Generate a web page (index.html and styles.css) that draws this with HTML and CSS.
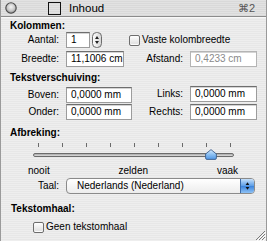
FILE: index.html
```html
<!DOCTYPE html>
<html lang="nl">
<head>
    <meta charset="UTF-8">
    <title>Inhoud</title>
    <link rel="stylesheet" href="styles.css">
</head>
<body>
    <div class="panel">
        <div class="titlebar">
            <svg class="close" width="12" height="12" viewBox="0 0 12 12">
                <defs>
                    <radialGradient id="cg" cx="0.5" cy="0.4" r="0.6">
                        <stop offset="0" stop-color="#f4f4f4"/>
                        <stop offset="0.6" stop-color="#c8c8c8"/>
                        <stop offset="1" stop-color="#8a8a8a"/>
                    </radialGradient>
                </defs>
                <circle cx="6" cy="6" r="5.2" fill="url(#cg)" stroke="#4a4a4a" stroke-width="1.1"/>
            </svg>
            <span class="title-box"></span>
            <span class="title">Inhoud</span>
            <span class="shortcut">⌘2</span>
        </div>

        <div class="content">
            <h3 class="heading">Kolommen:</h3>
            <div class="row">
                <span class="label">Aantal:</span>
                <span class="field small">1</span>
                <svg class="stepper" width="10" height="16" viewBox="0 0 10 16">
                    <defs>
                        <linearGradient id="sg" x1="0" y1="0" x2="1" y2="0">
                            <stop offset="0" stop-color="#ffffff"/>
                            <stop offset="1" stop-color="#d4d4d4"/>
                        </linearGradient>
                    </defs>
                    <rect x="0.5" y="0.5" width="9" height="15" rx="4" fill="url(#sg)" stroke="#6c6c6c"/>
                    <path d="M5 4 L7 7 L3 7 Z" fill="#222"/>
                    <path d="M5 12 L7 9 L3 9 Z" fill="#222"/>
                </svg>
                <span class="check-wrap">
                    <span class="checkbox"></span>
                    <span class="check-label">Vaste kolombreedte</span>
                </span>
            </div>
            <div class="row">
                <span class="label">Breedte:</span>
                <span class="field medium">11,1006 cm</span>
                <span class="right">
                    <span class="label-right">Afstand:</span>
                    <span class="field wide disabled">0,4233 cm</span>
                </span>
            </div>

            <h3 class="heading second">Tekstverschuiving:</h3>
            <div class="row">
                <span class="label">Boven:</span>
                <span class="field mm">0,0000 mm</span>
                <span class="right raised">
                    <span class="label-right">Links:</span>
                    <span class="field wide">0,0000 mm</span>
                </span>
            </div>
            <div class="row tight">
                <span class="label">Onder:</span>
                <span class="field mm">0,0000 mm</span>
                <span class="right">
                    <span class="label-right">Rechts:</span>
                    <span class="field wide">0,0000 mm</span>
                </span>
            </div>

            <h3 class="heading third">Afbreking:</h3>
            <div class="slider">
                <div class="ticks">
                    <i></i><i></i><i></i><i></i><i></i><i></i><i></i><i></i><i></i>
                </div>
                <div class="track"></div>
                <svg class="thumb" width="12" height="11" viewBox="0 0 12 11">
                    <defs>
                        <linearGradient id="tg" x1="0" y1="0" x2="0" y2="1">
                            <stop offset="0" stop-color="#d8ecff"/>
                            <stop offset="0.5" stop-color="#8cc0f2"/>
                            <stop offset="1" stop-color="#4f96e6"/>
                        </linearGradient>
                    </defs>
                    <path d="M6 0.6 L11.4 5 L11.4 9 Q11.4 10.4 10 10.4 L2 10.4 Q0.6 10.4 0.6 9 L0.6 5 Z" fill="url(#tg)" stroke="#3c5f8c" stroke-width="0.9"/>
                </svg>
            </div>
            <div class="scale">
                <span>nooit</span>
                <span>zelden</span>
                <span>vaak</span>
            </div>
            <div class="row popup-row">
                <span class="label">Taal:</span>
                <span class="popup">
                    <span class="popup-text">Nederlands (Nederland)</span>
                    <span class="popup-arrows">
                        <svg width="14" height="14" viewBox="0 0 14 14">
                            <path d="M7 3 L9 6 L5 6 Z" fill="#111"/>
                            <path d="M7 11 L9 8 L5 8 Z" fill="#111"/>
                        </svg>
                    </span>
                </span>
            </div>

            <h3 class="heading fourth">Tekstomhaal:</h3>
            <div class="row wrap-row">
                <span class="checkbox"></span>
                <span class="check-label">Geen tekstomhaal</span>
            </div>
        </div>

        <svg class="grip" width="12" height="12" viewBox="0 0 12 12">
            <path d="M11 2 L2 11 M11 5 L5 11 M11 8 L8 11" stroke="#7a7a7a" stroke-width="1"/>
            <path d="M12 3 L3 12 M12 6 L6 12 M12 9 L9 12" stroke="#ffffff" stroke-width="1"/>
        </svg>
    </div>
</body>
</html>
```

FILE: styles.css
```css
* {
    box-sizing: border-box;
}

body {
    margin: 0;
    font-family: "Liberation Sans", Arial, sans-serif;
    font-size: 10px;
    color: #000;
}

.panel {
    position: relative;
    width: 267px;
    height: 241px;
    border-left: 1px solid #9a9a9a;
    border-right: 1px solid #9a9a9a;
    background: repeating-linear-gradient(to bottom, #eeeeee 0, #eeeeee 1px, #e7e7e7 1px, #e7e7e7 2px);
    overflow: hidden;
}

/* title bar */
.titlebar {
    display: flex;
    align-items: center;
    height: 17px;
    border-bottom: 1px solid #8c8c8c;
    background: repeating-linear-gradient(to bottom, #e2e2e2 0, #e2e2e2 1px, #d9d9d9 1px, #d9d9d9 2px);
    padding: 0 0 0 4px;
}

.close {
    display: block;
}

.title-box {
    width: 13px;
    height: 13px;
    margin-left: 31px;
    border: 1px solid #111;
}

.title {
    margin-left: 8px;
    font-size: 11.5px;
    line-height: 14px;
}

.shortcut {
    margin-left: auto;
    margin-right: 11px;
    font-size: 11px;
    color: #555;
}

/* content */
.content {
    border-top: 1px solid #f8f8f8;
    padding: 2px 9px 0 8px;
}

.heading {
    margin: 0;
    font-size: 10px;
    font-weight: bold;
    line-height: 12px;
    padding-left: 1px;
}

.heading.second {
    margin-top: 5px;
}

.heading.third {
    margin-top: 7px;
}

.heading.fourth {
    margin-top: 9px;
    padding-left: 2px;
}

.row {
    display: flex;
    align-items: center;
    height: 16px;
    margin-top: 3px;
    line-height: 12px;
}

.heading + .row {
    margin-top: 0;
}

.heading.second + .row {
    margin-top: 3px;
}

.row.tight {
    margin-top: 1px;
}

.label {
    width: 50px;
    text-align: right;
    margin-right: 7px;
}

.field {
    display: block;
    height: 16px;
    padding: 0 4px;
    border: 1px solid #9c9c9c;
    border-top-color: #6e6e6e;
    background: #fff;
    box-shadow: inset 0 1px 0 #d4d4d4;
    line-height: 14px;
    white-space: nowrap;
}

.field.small {
    width: 24px;
}

.field.medium {
    width: 58px;
}

.field.mm {
    width: 66px;
}

.field.wide {
    width: 67px;
}

.field.disabled {
    color: #8a8a8a;
    border-color: #b4b4b4;
}

.stepper {
    display: block;
    margin-left: 2px;
}

.check-wrap {
    display: flex;
    align-items: center;
    margin-left: 27px;
}

.checkbox {
    display: block;
    width: 11px;
    height: 11px;
    border: 1px solid #6e6e6e;
    border-radius: 2px;
    background: linear-gradient(#ffffff, #dcdcdc);
    box-shadow: inset 0 -1px 1px #ffffff;
}

.check-label {
    margin-left: 2px;
}

.right {
    display: flex;
    align-items: center;
    margin-left: auto;
}

.right.raised {
    margin-top: -3px;
}

.label-right {
    margin-right: 7px;
}

/* slider */
.slider {
    position: relative;
    height: 22px;
    margin-top: 3px;
}

.ticks {
    display: flex;
    justify-content: space-between;
    width: 193px;
    margin-left: 29px;
    padding-top: 1px;
}

.ticks i {
    display: block;
    width: 1px;
    height: 4px;
    background: #6a6a6a;
}

.track {
    width: 201px;
    height: 4px;
    margin: 6px 0 0 24px;
    border: 1px solid #6c6c6c;
    border-radius: 2px;
    background: linear-gradient(#a8a8a8, #dedede);
}

.thumb {
    position: absolute;
    left: 196px;
    top: 7px;
}

.scale {
    display: flex;
    justify-content: space-between;
    width: 210px;
    margin-left: 19px;
    margin-top: 1px;
    line-height: 12px;
}

.row.popup-row {
    margin-top: 1px;
}

.popup {
    display: flex;
    align-items: center;
    width: 189px;
    height: 16px;
    border: 1px solid #8a8a8a;
    border-radius: 4px;
    background: linear-gradient(#ffffff, #ececec);
    overflow: hidden;
}

.popup-text {
    flex: 1;
    padding-left: 10px;
}

.popup-arrows {
    display: flex;
    align-items: center;
    justify-content: center;
    width: 14px;
    height: 14px;
    border-left: 1px solid #3a6aa8;
    background: linear-gradient(#c6e0fa, #5a9ce6 50%, #3b83dc 51%, #8ec2f5);
}

.popup-arrows svg {
    display: block;
}

.heading + .row.wrap-row {
    margin-top: 4px;
    padding-left: 24px;
}

.grip {
    position: absolute;
    right: 0;
    bottom: 0;
}
```
